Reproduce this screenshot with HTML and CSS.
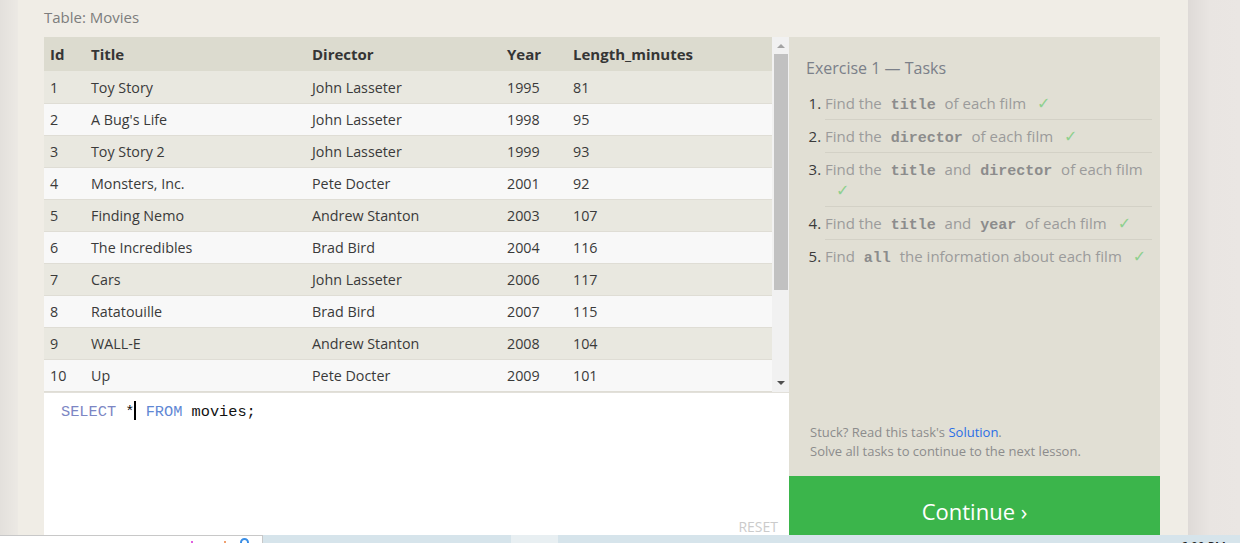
FILE: index.html
```html
<!DOCTYPE html>
<html>
<head>
<meta charset="utf-8">
<link rel="stylesheet" href="styles.css">
</head>
<body>
<div class="screen">
  <div class="page">
    <div class="gutter gutter-left"></div>
    <main class="lesson">
      <div class="caption">Table: Movies</div>
      <div class="workspace">
        <section class="left-col">
          <div class="table-wrap">
            <div class="table-view">
              <table class="data">
                <colgroup>
                  <col class="c-id"><col class="c-title"><col class="c-dir"><col class="c-year"><col class="c-len">
                </colgroup>
                <thead>
                  <tr><th>Id</th><th>Title</th><th>Director</th><th>Year</th><th>Length_minutes</th></tr>
                </thead>
                <tbody>
                  <tr><td>1</td><td>Toy Story</td><td>John Lasseter</td><td>1995</td><td>81</td></tr>
                  <tr><td>2</td><td>A Bug's Life</td><td>John Lasseter</td><td>1998</td><td>95</td></tr>
                  <tr><td>3</td><td>Toy Story 2</td><td>John Lasseter</td><td>1999</td><td>93</td></tr>
                  <tr><td>4</td><td>Monsters, Inc.</td><td>Pete Docter</td><td>2001</td><td>92</td></tr>
                  <tr><td>5</td><td>Finding Nemo</td><td>Andrew Stanton</td><td>2003</td><td>107</td></tr>
                  <tr><td>6</td><td>The Incredibles</td><td>Brad Bird</td><td>2004</td><td>116</td></tr>
                  <tr><td>7</td><td>Cars</td><td>John Lasseter</td><td>2006</td><td>117</td></tr>
                  <tr><td>8</td><td>Ratatouille</td><td>Brad Bird</td><td>2007</td><td>115</td></tr>
                  <tr><td>9</td><td>WALL-E</td><td>Andrew Stanton</td><td>2008</td><td>104</td></tr>
                  <tr><td>10</td><td>Up</td><td>Pete Docter</td><td>2009</td><td>101</td></tr>
                </tbody>
              </table>
            </div>
            <div class="scrollbar">
              <span class="sb-arrow sb-up"></span>
              <div class="sb-track"><div class="sb-thumb"></div></div>
              <span class="sb-arrow sb-down"></span>
            </div>
          </div>
          <div class="editor">
            <div class="code"><span class="kw">SELECT</span> *<span class="cursor"></span> <span class="kw2">FROM</span> movies;</div>
            <div class="reset">RESET</div>
          </div>
        </section>
        <aside class="side">
          <div class="tasks">
            <h2 class="tasks-title">Exercise 1 — Tasks</h2>
            <ol class="task-list">
              <li>Find the <code>title</code> of each film<span class="check">✓</span></li>
              <li>Find the <code>director</code> of each film<span class="check">✓</span></li>
              <li>Find the <code>title</code> and <code>director</code> of each film<span class="check">✓</span></li>
              <li>Find the <code>title</code> and <code>year</code> of each film<span class="check">✓</span></li>
              <li>Find <code>all</code> the information about each film<span class="check">✓</span></li>
            </ol>
            <div class="hint">
              <p>Stuck? Read this task's <a class="link">Solution</a>.</p>
              <p>Solve all tasks to continue to the next lesson.</p>
            </div>
          </div>
          <div class="continue">Continue ›</div>
        </aside>
      </div>
    </main>
    <div class="gutter gutter-right"></div>
  </div>
  <div class="taskbar">
    <div class="tb-left">
      <span class="tb-dot tb-pink"></span>
      <span class="tb-dot tb-orange"></span>
      <span class="tb-ring"></span>
    </div>
    <div class="tb-right">
      <span class="tb-patch"></span>
      <span class="tb-clock">6:09 PM</span>
    </div>
  </div>
</div>
</body>
</html>
```
FILE: styles.css
```css
* { box-sizing: border-box; }
html, body { margin: 0; padding: 0; }
body {
  width: 1240px;
  height: 543px;
  overflow: hidden;
  font-family: "Open Sans", "Liberation Sans", sans-serif;
  background: #ebe7e3;
}
.screen { display: flex; flex-direction: column; height: 543px; }
.page { display: flex; height: 535px; flex-shrink: 0; }

.gutter-left {
  width: 18px;
  background: linear-gradient(to right, #e3e0dc, #ece9e4);
}
.gutter-right {
  flex: 1;
  background: linear-gradient(to right, #dedad7 0px, #e9e5e2 22px, #eae6e3 100%);
}

.lesson {
  width: 1170px;
  background: #f0ede6;
  padding: 7px 28px 0 26px;
  display: flex;
  flex-direction: column;
}
.caption {
  font-size: 15px;
  line-height: 20px;
  color: #7d7d7d;
  margin-bottom: 10px;
  height: 20px;
}
.workspace {
  display: flex;
  height: 498px;
  overflow: hidden;
}

/* left column */
.left-col { width: 745px; display: flex; flex-direction: column; }
.table-wrap {
  height: 355px;
  display: flex;
  overflow: hidden;
  background: #f8f8f8;
}
.table-view { width: 728px; overflow: hidden; }
.data {
  width: 728px;
  border-collapse: collapse;
  table-layout: fixed;
  font-size: 14.3px;
  color: #3a3a3a;
}
.c-id { width: 41px; }
.c-title { width: 221px; }
.c-dir { width: 195px; }
.c-year { width: 66px; }
.c-len { width: 205px; }
.data th {
  height: 34px;
  background: #dcdbcf;
  text-align: left;
  font-weight: 700;
  font-size: 15px;
  color: #353535;
  padding: 0 6px;
}
.data td {
  height: 32px;
  padding: 1px 6px 0;
  border-bottom: 1px solid #dfddd5;
  white-space: nowrap;
}
.data tbody tr:nth-child(odd) td { background: #e9e8e0; }
.data tbody tr:nth-child(even) td { background: #f8f8f8; }

.scrollbar {
  width: 17px;
  background: #f1f1f1;
  display: flex;
  flex-direction: column;
  align-items: center;
  padding: 0 1px 0 2px;
}
.sb-arrow { width: 0; height: 0; border-left: 4px solid transparent; border-right: 4px solid transparent; }
.sb-up { border-bottom: 4px solid #a3a3a3; margin-top: 7px; margin-bottom: 6px; }
.sb-down { border-top: 4px solid #505050; margin-top: 7px; margin-bottom: 7px; }
.sb-track { flex: 1; width: 100%; }
.sb-thumb { width: 100%; height: 236px; background: #c1c1c1; }

.editor {
  height: 143px;
  background: #ffffff;
  border-top: 1px solid #e2e0da;
  display: flex;
  flex-direction: column;
  justify-content: space-between;
  padding: 8px 0 0 17px;
}
.code {
  font-family: "Liberation Mono", "DejaVu Sans Mono", monospace;
  font-size: 15.3px;
  line-height: 20px;
  color: #111;
  white-space: pre;
}
.kw { color: #7c86c4; }
.kw2 { color: #5f87d4; }
.cursor {
  display: inline-block;
  width: 2px;
  height: 19px;
  background: #000;
  vertical-align: -4px;
}
.reset {
  align-self: flex-end;
  font-size: 14px;
  line-height: 18px;
  color: #cbcbcb;
  margin-right: 11px;
  margin-bottom: -1px;
}

/* right column */
.side {
  width: 371px;
  display: flex;
  flex-direction: column;
  overflow: hidden;
}
.tasks {
  height: 439px;
  flex-shrink: 0;
  background: #e1dfd4;
  padding: 20px 8px 0 17px;
  display: flex;
  flex-direction: column;
}
.tasks-title {
  margin: 0;
  font-size: 16px;
  font-weight: 400;
  line-height: 22px;
  color: #7b8089;
}
.task-list {
  margin: 8px 0 0 0;
  padding: 0 0 0 19px;
  color: #3a3a3a;
  font-size: 15px;
}
.task-list li {
  padding: 6px 0 5px;
  line-height: 21px;
  border-bottom: 1px solid #d3d1c6;
  color: #9b9b9b;
}
.task-list li:last-child { border-bottom: none; }
.task-list li::marker { color: #3a3a3a; }
.task-list code {
  font-family: "Liberation Mono", "DejaVu Sans Mono", monospace;
  font-weight: 700;
  font-size: 15px;
  line-height: 1;
  color: #8c8c8c;
  padding: 0 4px;
  margin: 0 1px;
}
.check {
  display: inline-block;
  margin-left: 11px;
  color: #8ed08e;
  font-family: "DejaVu Sans", sans-serif;
  font-size: 16px;
  line-height: 1;
}
.hint {
  margin-top: auto;
  margin-left: 4px;
  padding-bottom: 15px;
  font-size: 13px;
  line-height: 19px;
  color: #8c8c8c;
}
.hint p { margin: 0; }
.link { color: #2a6ee6; }
.continue {
  height: 70px;
  flex-shrink: 0;
  background: #3bb54b;
  color: #ffffff;
  font-size: 22px;
  display: flex;
  align-items: center;
  justify-content: center;
}

/* taskbar */
.taskbar {
  height: 8px;
  display: flex;
  overflow: hidden;
}
.tb-left {
  width: 263px;
  background: #ffffff;
  border-top: 1px solid #c8c8c8;
  border-right: 1px solid #c8c8c8;
  display: flex;
  align-items: flex-end;
  padding-left: 191px;
}
.tb-dot { width: 2px; height: 2px; }
.tb-pink { background: #e060e0; margin-right: 31px; }
.tb-orange { background: #f0a070; margin-right: 14px; }
.tb-ring {
  width: 9px; height: 9px; border-radius: 50%;
  border: 2px solid #3a8ee6;
  margin-bottom: -4px;
}
.tb-right {
  flex: 1;
  background: #d6e4eb;
  display: flex;
  padding-left: 248px;
}
.tb-patch { width: 47px; height: 8px; background: #e8eff2; }
.tb-clock {
  margin-left: auto;
  margin-right: 14px;
  font-family: "Noto Sans", sans-serif;
  font-size: 12px;
  line-height: 12px;
  padding-top: 6px;
  color: #222;
}
```
